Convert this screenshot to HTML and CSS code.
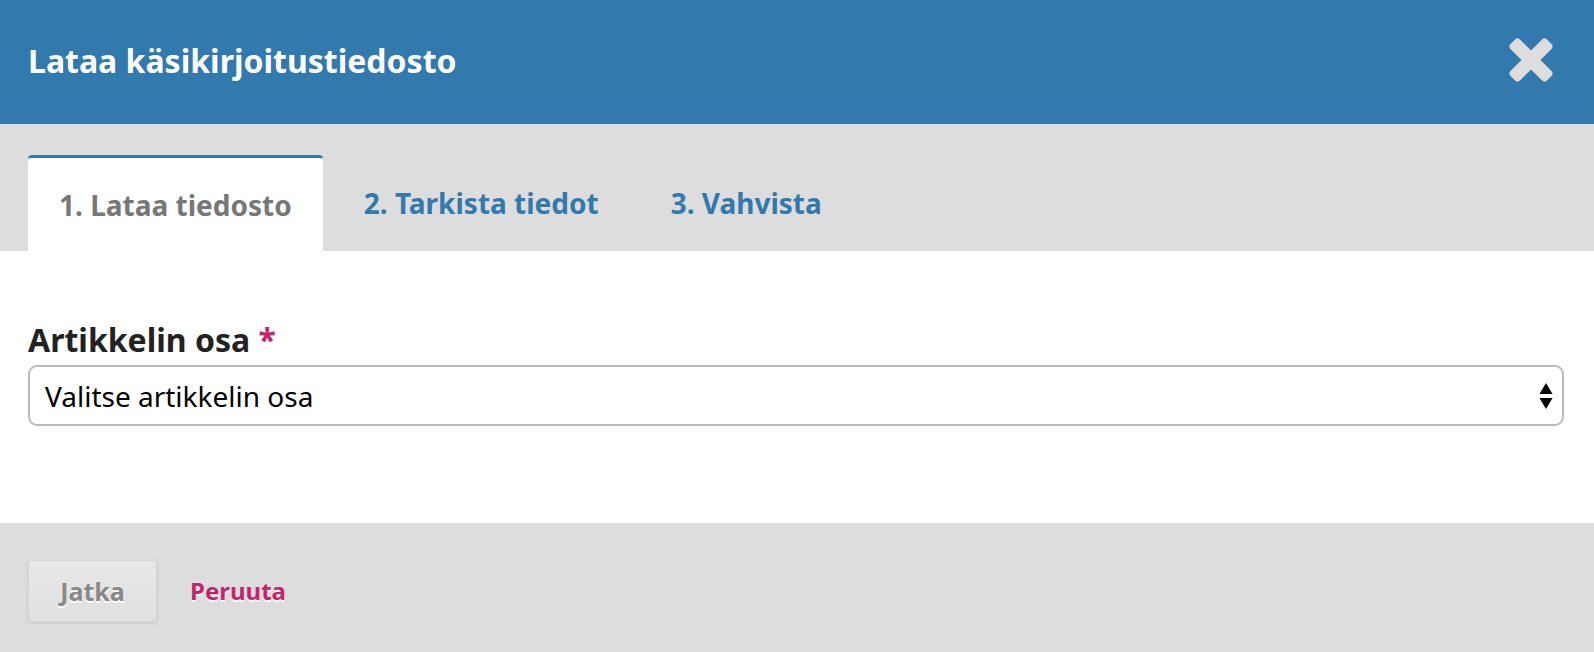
FILE: index.html
```html
<!DOCTYPE html>
<html lang="fi">
<head>
<meta charset="utf-8">
<title>Lataa käsikirjoitustiedosto</title>
<link rel="stylesheet" href="styles.css">
</head>
<body>
<div class="modal">
  <header class="modal-header">
    <h1 class="modal-title">Lataa käsikirjoitustiedosto</h1>
    <button class="close" aria-label="Sulje">
      <svg width="44" height="44" viewBox="0 0 46 46" aria-hidden="true">
        <rect x="-4" y="16" width="54" height="14" rx="4" fill="#dddddd" transform="rotate(45 23 23)"/>
        <rect x="-4" y="16" width="54" height="14" rx="4" fill="#dddddd" transform="rotate(-45 23 23)"/>
      </svg>
    </button>
  </header>
  <nav class="tabs">
    <div class="tab active">1. Lataa tiedosto</div>
    <div class="tab">2. Tarkista tiedot</div>
    <div class="tab">3. Vahvista</div>
  </nav>
  <section class="content">
    <label class="field-label">Artikkelin osa <span class="req">*</span></label>
    <div class="select">
      <span class="select-text">Valitse artikkelin osa</span>
      <svg class="arrows" width="14" height="26" viewBox="0 0 14 26" aria-hidden="true">
        <path d="M7 0 L13.5 11 L0.5 11 Z" fill="#000"/>
        <path d="M7 26 L13.5 15 L0.5 15 Z" fill="#000"/>
      </svg>
    </div>
  </section>
  <footer class="footer">
    <button class="btn">Jatka</button>
    <a class="cancel" href="#">Peruuta</a>
  </footer>
</div>
</body>
</html>
```

FILE: styles.css
```css
html, body {
  margin: 0;
  padding: 0;
  background: #ffffff;
}
body {
  font-family: "Noto Sans", "Open Sans", sans-serif;
}
.modal {
  width: 1594px;
  height: 652px;
  display: flex;
  flex-direction: column;
}
.modal-header {
  height: 124px;
  background: #3279ad;
  display: flex;
  align-items: center;
  justify-content: space-between;
  padding: 0 41px 4px 28px;
  box-sizing: border-box;
  flex-shrink: 0;
}
.modal-title {
  margin: 0;
  color: #ffffff;
  font-size: 32px;
  font-weight: 700;
}
.close {
  background: none;
  border: 0;
  padding: 0;
  width: 44px;
  height: 44px;
  display: flex;
}
.tabs {
  height: 127px;
  background: #dddddd;
  display: flex;
  align-items: flex-end;
  padding-left: 28px;
  gap: 10px;
  flex-shrink: 0;
}
.tab {
  height: 96px;
  display: flex;
  align-items: center;
  padding: 0 31px;
  font-size: 28px;
  font-weight: 700;
  color: #3279ad;
  box-sizing: border-box;
}
.tab.active {
  background: #ffffff;
  color: #777777;
  border-top: 3px solid #3279ad;
  border-radius: 4px 4px 0 0;
}
.content {
  height: 272px;
  padding: 70px 30px 0 28px;
  box-sizing: border-box;
  background: #ffffff;
  flex-shrink: 0;
}
.field-label {
  display: block;
  font-size: 32px;
  font-weight: 700;
  color: #222222;
  line-height: 38px;
  margin-bottom: 6px;
}
.req {
  color: #c5246b;
}
.select {
  height: 61px;
  border: 2px solid #bbbbbb;
  border-radius: 9px;
  box-sizing: border-box;
  display: flex;
  align-items: center;
  justify-content: space-between;
  padding: 0 9px 0 15px;
}
.select-text {
  font-size: 28px;
  color: #000000;
}
.arrows {
  display: block;
}
.footer {
  flex: 1;
  background: #dddddd;
  display: flex;
  align-items: flex-start;
  padding: 37px 0 0 28px;
  gap: 33px;
}
.btn {
  width: 129px;
  height: 62px;
  border: 1px solid #d6d6d6;
  border-radius: 4px;
  background: linear-gradient(#e8e8e8, #e0e0e0);
  box-shadow: 0 1px 3px rgba(0,0,0,0.12);
  font-family: inherit;
  font-size: 25px;
  font-weight: 700;
  color: #888888;
  text-shadow: 0 2px 0 #ffffff;
  padding: 0;
}
.cancel {
  line-height: 62px;
  font-size: 24px;
  font-weight: 700;
  color: #c5246b;
  text-decoration: none;
  text-shadow: 0 2px 0 #ffffff;
}
```
